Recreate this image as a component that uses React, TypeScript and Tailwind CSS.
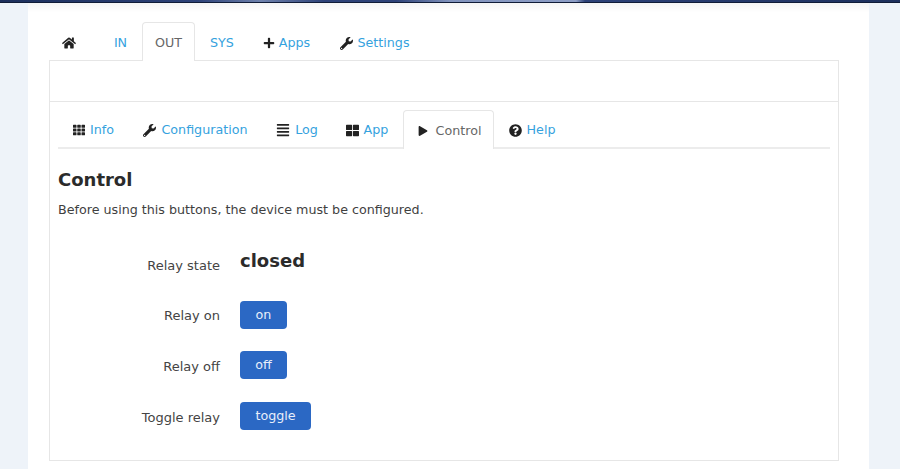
import type { ReactNode } from "react";
import { FaAlignJustify, FaHome, FaPlay, FaPlus, FaQuestionCircle, FaTh, FaThLarge, FaWrench } from "react-icons/fa";

function MainTab({ icon, label, active, className }: { icon?: ReactNode; label?: string; active?: boolean; className: string }) {
  return (
    <div
      className={`flex h-[39px] items-center justify-center gap-[4px] rounded-t-[4px] border border-b-0 pt-[2px] ${
        active ? "relative z-10 -mb-px border-[#e6e6e6] bg-white text-[#666666]" : "border-transparent text-[#35a2de]"
      } ${className}`}
    >
      {icon && <span className="text-[#222222]">{icon}</span>}
      {label}
    </div>
  );
}

function SubTab({ icon, label, active, className }: { icon: ReactNode; label: string; active?: boolean; className: string }) {
  return (
    <div
      className={`flex items-center justify-center gap-[5px] rounded-t-[4px] border border-b-0 pt-[2px] ${
        active ? "relative z-10 -mb-[2px] border-[#e6e6e6] bg-white text-[#666666]" : "border-transparent text-[#35a2de]"
      } ${className}`}
    >
      <span className="text-[#222222]">{icon}</span>
      {label}
    </div>
  );
}

function Row({ label, children, className, labelClass = "pt-[1px]" }: { label: string; children: ReactNode; className: string; labelClass?: string }) {
  return (
    <div className={`flex items-center ${className}`}>
      <div className={`w-[162px] text-right text-[13px] text-[#444444] ${labelClass}`}>{label}</div>
      <div className="ml-[20px]">{children}</div>
    </div>
  );
}

function Btn({ label, className }: { label: string; className: string }) {
  return (
    <div className={`flex h-[28px] items-center justify-center rounded-[4px] bg-[#2b68c4] text-[#e8eefa] ${className}`}>
      {label}
    </div>
  );
}

export default function App() {
  return (
    <div
      className="flex h-[469px] w-[900px] flex-col overflow-hidden bg-[#eef3f9] text-[12.7px]"
      style={{ fontFamily: '"DejaVu Sans", sans-serif' }}
    >
      <div className="h-[3px] border-b border-[#101c38] bg-[linear-gradient(to_right,#1c2f5c_0%,#2d4278_22%,#6f82ad_29%,#2d4278_36%,#2d4278_44%,#8193bd_50%,#8c9dc5_62%,#8c9dc5_64%,#2d4278_65%,#1c2f5c_100%)]" />
      <div className="ml-[28px] h-[466px] w-[841px] bg-gradient-to-b from-[#f5f5f5] to-white to-[2%] px-[21px] pt-[19px]">
        <div className="flex h-[38px] items-stretch">
          <MainTab icon={<FaHome size={14} />} className="ml-px w-[38px]" />
          <MainTab label="IN" className="ml-[12px] w-[41px]" />
          <MainTab label="OUT" active className="ml-px w-[53px]" />
          <MainTab label="SYS" className="w-[54px]" />
          <MainTab icon={<FaPlus size={12} />} label="Apps" className="w-[75px]" />
          <MainTab icon={<FaWrench size={13} />} label="Settings" className="ml-[6px] w-[90px]" />
        </div>
        <div className="h-[401px] w-[790px] border border-[#e6e6e6]">
          <div className="h-[41px] border-b border-[#e6e6e6]" />
          <div className="px-[8px] pt-[8px]">
            <div className="flex h-[39px] items-stretch border-b-2 border-[#ececec]">
              <SubTab icon={<FaTh size={12} />} label="Info" className="w-[71px]" />
              <SubTab icon={<FaWrench size={13} />} label="Configuration" className="w-[133px]" />
              <SubTab icon={<FaAlignJustify size={14} />} label="Log" className="w-[70px]" />
              <SubTab icon={<FaThLarge size={13} />} label="App" className="w-[70px]" />
              <SubTab icon={<FaPlay size={10} />} label="Control" active className="ml-px w-[91px] gap-[8px] pl-[2px]" />
              <SubTab icon={<FaQuestionCircle size={13} />} label="Help" className="w-[76px]" />
            </div>
            <h2 className="mt-[19px] text-[18px] leading-[24px] font-bold text-[#2b2b2b]">Control</h2>
            <p className="mt-[9px] leading-[18px] text-[#3f3f3f]">
              Before using this buttons, the device must be configured.
            </p>
            <Row label="Relay state" className="mt-[30px] h-[32px]">
              <div className="-mt-[10px] text-[18px] font-bold text-[#2b2b2b]">closed</div>
            </Row>
            <Row label="Relay on" className="mt-[20px]">
              <Btn label="on" className="w-[47px]" />
            </Row>
            <Row label="Relay off" className="mt-[22px]" labelClass="pt-[3px]">
              <Btn label="off" className="w-[47px]" />
            </Row>
            <Row label="Toggle relay" className="mt-[23px]" labelClass="pt-[3px]">
              <Btn label="toggle" className="w-[71px]" />
            </Row>
          </div>
        </div>
      </div>
    </div>
  );
}
